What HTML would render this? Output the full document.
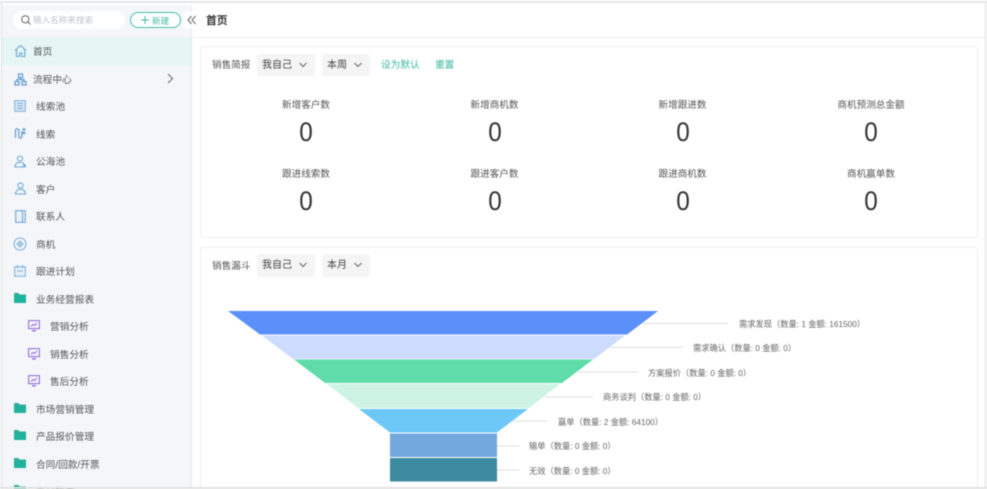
<!DOCTYPE html>
<html lang="zh"><head><meta charset="utf-8">
<style>
*{box-sizing:border-box}
html,body{margin:0;padding:0;width:987px;height:489px;overflow:hidden;background:#fff}
body{font-family:"Liberation Sans","Noto Sans CJK SC",sans-serif;color:#555;position:relative}
#wrap{position:absolute;left:0;top:0;width:987px;height:489px;filter:blur(.45px)}
.a{position:absolute;white-space:nowrap}
.nav{font-size:9.7px;color:#555;line-height:14px;height:14px;margin-top:2px}
.card{position:absolute;background:#fff;border:1px solid #eee;border-radius:3px}
.dd{position:absolute;background:#f5f5f5;border-radius:3px;font-size:10px;color:#444;line-height:24px;padding-left:5px}
.dd svg{position:absolute;top:8px}
.tt{position:absolute;width:160px;text-align:center;font-size:9.6px;color:#555;line-height:14px;margin-top:2px}
.num{position:absolute;width:100px;text-align:center;font-size:27px;color:#333;line-height:30px;transform:scaleX(.9)}
.lb{position:absolute;font-size:8.25px;color:#666;line-height:12px;white-space:nowrap;margin-top:1.5px}
svg.i{position:absolute}
</style></head><body><div id="wrap">

<div class="a" style="left:0;top:1px;width:987px;height:2px;background:#e4e4e4"></div>
<div class="a" style="left:1px;top:3px;width:1px;height:485px;background:#ddd"></div>
<div class="a" style="left:985px;top:3px;width:1px;height:485px;background:#ddd"></div>

<!-- sidebar -->
<div class="a" style="left:2px;top:5px;width:190px;height:482px;background:#f4f6fa;border-right:1px solid #e6e8ec;overflow:hidden">
  <div class="a" style="left:0;top:32px;width:189px;height:28px;background:#e5f6f4"></div>
</div>

<div class="a" style="left:13px;top:11px;width:112px;height:18px;border-radius:9px;background:#fff"></div>
<svg class="i" style="left:20px;top:14px" width="12" height="12" viewBox="0 0 12 12" fill="none" stroke="#666" stroke-width="1"><circle cx="5.3" cy="5.3" r="3.6"/><path d="M8 8l2.4 2.4"/></svg>
<div class="a" style="left:33px;top:14px;font-size:8.6px;line-height:13px;color:#c2c4c8">输入名称来搜索</div>
<div class="a" style="left:130px;top:12px;width:51px;height:16px;border:1px solid #45bcaa;border-radius:8px;background:#fff;"></div>
<svg class="i" style="left:140px;top:15px" width="10" height="10" viewBox="0 0 10 10" stroke="#3cb8a5" stroke-width="1"><path d="M5 1v8M1 5h8"/></svg>
<div class="a" style="left:152px;top:14px;font-size:8.6px;line-height:14px;color:#45bcaa">新建</div>
<div class="a" style="left:184px;top:12px;width:15px;height:16px;background:#fff"></div>
<svg class="i" style="left:187px;top:15px" width="10" height="10" viewBox="0 0 10 10" fill="none" stroke="#666" stroke-width="1"><path d="M4.6 1L1 5l3.6 4M8.6 1L5 5l3.6 4"/></svg>

<!-- header -->
<div class="a" style="left:192px;top:37px;width:793px;height:1px;background:#eeeeee"></div>
<div class="a" style="left:206px;top:14px;font-size:10.8px;font-weight:bold;line-height:14px;color:#333">首页</div>

<!-- nav icons -->
<svg class="i" style="left:14px;top:44px" width="13" height="14" viewBox="0 0 13 14" fill="none" stroke="#6fa8d6" stroke-width="1.1"><path d="M1 6.5L6.5 1.5 12 6.500M2.500 5.500v7h3V9h2.200v3.500h3v-7"/></svg>
<svg class="i" style="left:14px;top:73px" width="13" height="13" viewBox="0 0 13 13" fill="none" stroke="#5f9bd0" stroke-width="1.2"><rect x="4.500" y="1" width="4" height="3.500"/><rect x="1" y="8.500" width="4" height="3.500"/><rect x="8" y="8.500" width="4" height="3.500"/><path d="M6.500 4.500v2M3 8.500V6.500h7v2"/></svg>
<svg class="i" style="left:14px;top:100px" width="12" height="12" viewBox="0 0 12 12" fill="#d9e8f5" stroke="#7fb0da" stroke-width="1"><rect x=".7" y=".7" width="10.600" height="10.600"/><path d="M3 3.500h6M3 6h6M3 8.500h6" fill="none"/></svg>
<svg class="i" style="left:14px;top:127px" width="12" height="13" viewBox="0 0 12 13" fill="none" stroke="#5f9bd0" stroke-width="1.200"><path d="M1.500 11V3.500a1.700 1.700 0 0 1 3.400 0v6a1.500 1.500 0 0 0 3 0V4"/><circle cx="10" cy="2.500" r=".8"/><circle cx="10" cy="6" r=".8"/></svg>
<svg class="i" style="left:14px;top:155px" width="13" height="13" viewBox="0 0 13 13" fill="none" stroke="#6fa8d6" stroke-width="1.100"><circle cx="6" cy="3.500" r="2.500"/><path d="M1 12V10.500L3.500 7.500h5L11 10.500V12z"/><path d="M9 10.500h3" stroke="#3c9bd0"/></svg>
<svg class="i" style="left:14px;top:182px" width="13" height="13" viewBox="0 0 13 13" fill="none" stroke="#6fa8d6" stroke-width="1.100"><circle cx="6.500" cy="3.500" r="2.600"/><path d="M1.500 12V10.500L4 7.500h5L11.500 10.500V12z"/></svg>
<svg class="i" style="left:15px;top:210px" width="11" height="13" viewBox="0 0 11 13" fill="#eaf2f9" stroke="#6fa8d6" stroke-width="1.100"><rect x=".7" y=".7" width="9.600" height="11.600"/><path d="M7.500 1v11" fill="none"/></svg>
<svg class="i" style="left:13px;top:237px" width="14" height="14" viewBox="0 0 14 14" fill="none" stroke="#7fb0da" stroke-width="1.100"><circle cx="7" cy="7" r="6"/><path d="M7 4l3 3-3 3-3-3z"/><circle cx="7" cy="7" r=".6"/></svg>
<svg class="i" style="left:14px;top:265px" width="12" height="12" viewBox="0 0 12 12" fill="#e5eff8" stroke="#7fb0da" stroke-width="1"><rect x=".7" y="1.700" width="10.600" height="9.600"/><path d="M3.500 0v3M8.500 0v3M3 6h6" fill="none"/></svg>
<svg class="i" style="left:14px;top:293px" width="12" height="10" viewBox="0 0 12 10"><path d="M0 0h4.500l1 1.500H12V3H0z" fill="#2fae9a"/><path d="M0 3h12v7H0z" fill="#1db39c"/></svg>
<svg class="i" style="left:14px;top:403px" width="12" height="10" viewBox="0 0 12 10"><path d="M0 0h4.500l1 1.500H12V3H0z" fill="#2fae9a"/><path d="M0 3h12v7H0z" fill="#1db39c"/></svg>
<svg class="i" style="left:14px;top:430px" width="12" height="10" viewBox="0 0 12 10"><path d="M0 0h4.500l1 1.500H12V3H0z" fill="#2fae9a"/><path d="M0 3h12v7H0z" fill="#1db39c"/></svg>
<svg class="i" style="left:14px;top:458px" width="12" height="10" viewBox="0 0 12 10"><path d="M0 0h4.500l1 1.500H12V3H0z" fill="#2fae9a"/><path d="M0 3h12v7H0z" fill="#1db39c"/></svg>
<svg class="i" style="left:14px;top:485px" width="12" height="10" viewBox="0 0 12 10"><path d="M0 0h4.500l1 1.500H12V3H0z" fill="#2fae9a"/><path d="M0 3h12v7H0z" fill="#1db39c"/></svg>
<svg class="i" style="left:28px;top:320px" width="12" height="12" viewBox="0 0 12 12" fill="none" stroke="#8f62d8" stroke-width="1"><rect x=".6" y=".6" width="10.800" height="8"/><path d="M3 6.500l2-2 1.500 1L9 3" stroke-width=".9"/><path d="M4 10.800h4" stroke-width="1.300"/></svg>
<svg class="i" style="left:28px;top:348px" width="12" height="12" viewBox="0 0 12 12" fill="none" stroke="#8f62d8" stroke-width="1"><rect x=".6" y=".6" width="10.800" height="8"/><path d="M3 6.500l2-2 1.500 1L9 3" stroke-width=".9"/><path d="M4 10.800h4" stroke-width="1.300"/></svg>
<svg class="i" style="left:28px;top:375px" width="12" height="12" viewBox="0 0 12 12" fill="none" stroke="#8f62d8" stroke-width="1"><rect x=".6" y=".6" width="10.800" height="8"/><path d="M3 6.500l2-2 1.500 1L9 3" stroke-width=".9"/><path d="M4 10.800h4" stroke-width="1.300"/></svg>

<!-- nav text -->
<div class="a nav" style="left:33px;top:44px">首页</div>
<div class="a nav" style="left:33px;top:72px">流程中心</div>
<svg class="i" style="left:166px;top:73px" width="9" height="11" viewBox="0 0 9 11" fill="none" stroke="#666" stroke-width="1"><path d="M2 1l4.500 4.500L2 10"/></svg>
<div class="a nav" style="left:36px;top:99px">线索池</div>
<div class="a nav" style="left:36px;top:127px">线索</div>
<div class="a nav" style="left:36px;top:154px">公海池</div>
<div class="a nav" style="left:36px;top:182px">客户</div>
<div class="a nav" style="left:36px;top:209px">联系人</div>
<div class="a nav" style="left:36px;top:237px">商机</div>
<div class="a nav" style="left:36px;top:264px">跟进计划</div>
<div class="a nav" style="left:36px;top:292px">业务经营报表</div>
<div class="a nav" style="left:50px;top:319px">营销分析</div>
<div class="a nav" style="left:50px;top:347px">销售分析</div>
<div class="a nav" style="left:50px;top:374px">售后分析</div>
<div class="a nav" style="left:36px;top:402px">市场营销管理</div>
<div class="a nav" style="left:36px;top:429px">产品报价管理</div>
<div class="a nav" style="left:36px;top:457px">合同/回款/开票</div>
<div class="a nav" style="left:36px;top:484px">办公协同</div>

<!-- card 1 -->
<div class="card" style="left:200px;top:46px;width:778px;height:192px"></div>
<div class="a" style="left:212px;top:59px;font-size:9.6px;line-height:14px;color:#555">销售简报</div>
<div class="dd" style="left:257px;top:54px;width:58px;height:22px">我自己<svg style="left:42px" width="8" height="6" viewBox="0 0 8 6" fill="none" stroke="#666" stroke-width="1"><path d="M.5 1l3.500 3.500L7.500 1"/></svg></div>
<div class="dd" style="left:322px;top:54px;width:48px;height:22px">本周<svg style="left:32px" width="8" height="6" viewBox="0 0 8 6" fill="none" stroke="#666" stroke-width="1"><path d="M.5 1l3.500 3.500L7.500 1"/></svg></div>
<div class="a" style="left:381px;top:59px;font-size:9.7px;line-height:14px;color:#3cb8a5">设为默认</div>
<div class="a" style="left:435px;top:59px;font-size:9.7px;line-height:14px;color:#3cb8a5">重置</div>

<div class="tt" style="left:226px;top:97px">新增客户数</div><div class="num" style="left:256px;top:117px">0</div>
<div class="tt" style="left:414.500px;top:97px">新增商机数</div><div class="num" style="left:444.500px;top:117px">0</div>
<div class="tt" style="left:602.500px;top:97px">新增跟进数</div><div class="num" style="left:632.500px;top:117px">0</div>
<div class="tt" style="left:791px;top:97px">商机预测总金额</div><div class="num" style="left:821px;top:117px">0</div>
<div class="tt" style="left:226px;top:166px">跟进线索数</div><div class="num" style="left:256px;top:186px">0</div>
<div class="tt" style="left:414.500px;top:166px">跟进客户数</div><div class="num" style="left:444.500px;top:186px">0</div>
<div class="tt" style="left:602.500px;top:166px">跟进商机数</div><div class="num" style="left:632.500px;top:186px">0</div>
<div class="tt" style="left:791px;top:166px">商机赢单数</div><div class="num" style="left:821px;top:186px">0</div>

<!-- card 2 -->
<div class="card" style="left:200px;top:247px;width:778px;height:241px"></div>
<div class="a" style="left:212px;top:260px;font-size:9.6px;line-height:14px;color:#555">销售漏斗</div>
<div class="dd" style="left:257px;top:254px;width:58px;height:23px">我自己<svg style="left:42px" width="8" height="6" viewBox="0 0 8 6" fill="none" stroke="#666" stroke-width="1"><path d="M.5 1l3.500 3.500L7.500 1"/></svg></div>
<div class="dd" style="left:322px;top:254px;width:48px;height:23px">本月<svg style="left:32px" width="8" height="6" viewBox="0 0 8 6" fill="none" stroke="#666" stroke-width="1"><path d="M.5 1l3.500 3.500L7.500 1"/></svg></div>

<!-- funnel -->
<svg class="i" style="left:0;top:0" width="987" height="489" viewBox="0 0 987 489">
<polygon points="228,311 658,311 627,334.500 260,334.500" fill="#5b8ff9"/>
<polygon points="262,335.500 625,335.500 594,359 293,359" fill="#cddcfd"/>
<polygon points="294,359.500 593,359.500 562,383 325,383" fill="#5fdcaa"/>
<polygon points="327,384 560,384 529,408 358,408" fill="#cdf3e4"/>
<polygon points="359,409 528,409 497,432.500 390,432.500" fill="#6dc8f8"/>
<rect x="390" y="433.500" width="107" height="23.500" fill="#71a9df"/>
<rect x="390" y="458" width="107" height="23.500" fill="#3c8aa0"/>
<g stroke="#ddd" stroke-width="1" fill="none">
<path d="M643 323.500H728M610 347.500H683M578 372H638M545 397H593M513 421H547M497 446H519M497 470H519"/>
</g>
</svg>
<div class="lb" style="left:739px;top:317px">需求发现（数量: 1 金额: 161500）</div>
<div class="lb" style="left:693px;top:341px">需求确认（数量: 0 金额: 0）</div>
<div class="lb" style="left:648px;top:366px">方案报价（数量: 0 金额: 0）</div>
<div class="lb" style="left:603px;top:390px">商务谈判（数量: 0 金额: 0）</div>
<div class="lb" style="left:558px;top:415px">赢单（数量: 2 金额: 64100）</div>
<div class="lb" style="left:529px;top:439px">输单（数量: 0 金额: 0）</div>
<div class="lb" style="left:529px;top:464px">无效（数量: 0 金额: 0）</div>

<div class="a" style="left:0;top:487px;width:987px;height:2px;background:#e2e2e2"></div>
</div></body></html>
